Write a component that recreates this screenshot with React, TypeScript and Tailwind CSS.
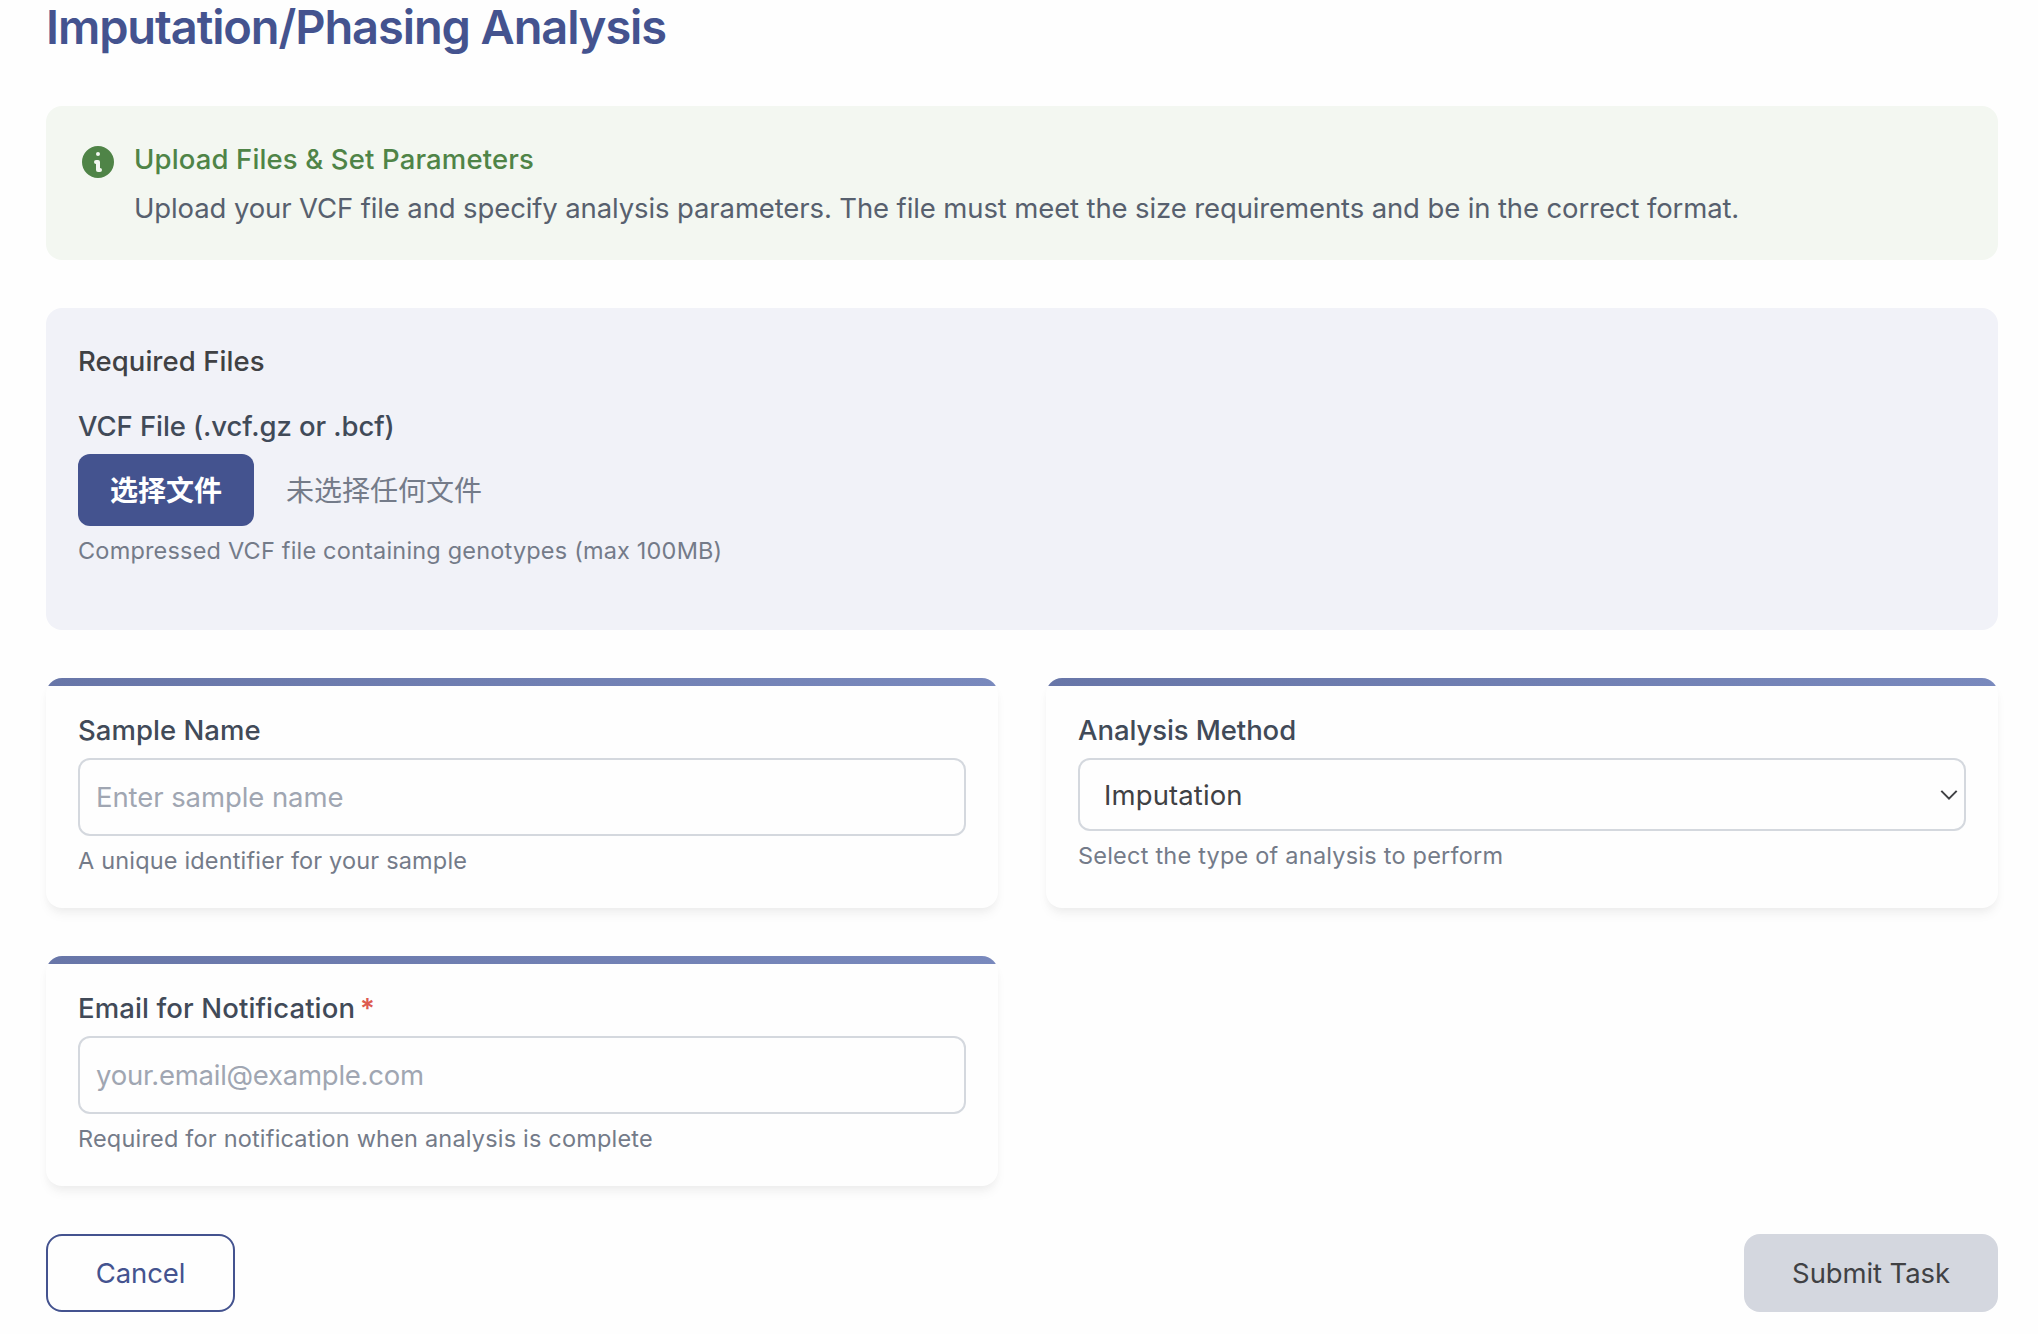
import React from "react";

interface FieldCardProps {
  label: string;
  labelClass: string;
  required?: boolean;
  hint: string;
  hintClass: string;
  children: React.ReactNode;
}

function FieldCard({ label, labelClass, required, hint, hintClass, children }: FieldCardProps) {
  return (
    <div className="h-[230px] overflow-hidden rounded-2xl bg-[#fefefe] shadow-[0_8px_12px_-2px_rgba(0,0,0,0.05),0_4px_8px_-2px_rgba(0,0,0,0.03)]">
      <div className="h-2 bg-linear-to-r from-[#6876a8] to-[#7989bd]" />
      <div className="px-8 pt-6">
        <label className="block text-[27.5px] leading-[40px] font-medium whitespace-nowrap text-[#414a58]">
          <span className={labelClass}>{label}</span>
          {required && <span className="ml-[5px] font-semibold text-[#dd5a50]">*</span>}
        </label>
        <div className="mt-2">{children}</div>
        <p className={`mt-2 text-[23.5px] leading-[33px] whitespace-nowrap text-[#747b89] ${hintClass}`}>{hint}</p>
      </div>
    </div>
  );
}

const inputClass =
  "block h-[78px] w-full rounded-xl border-2 border-[#d4d8de] bg-[#fefefe] px-4 text-[27.5px] placeholder:text-[#a0a6b2] placeholder:opacity-100 outline-none";

export default function App() {
  return (
    <main className="h-[1334px] bg-[#fefefe] pr-10 pl-[46px] font-['Inter','Noto_Sans_CJK_SC',sans-serif] text-[#404144]">
      <h1 className="text-[47px] leading-[54px] font-semibold tracking-[-1.1px] whitespace-nowrap text-[#44538f]">
        Imputation/Phasing Analysis
      </h1>

      <section className="mt-[52px] flex h-[154px] gap-4 rounded-2xl bg-[#f3f7f1] p-8">
        <svg viewBox="0 0 20 20" className="mt-1 -ml-0 size-10 shrink-0 fill-[#4f8447]">
          <path
            fillRule="evenodd"
            clipRule="evenodd"
            d="M18 10a8 8 0 11-16 0 8 8 0 0116 0zm-7-4a1 1 0 11-2 0 1 1 0 012 0zM9 9a1 1 0 000 2v3a1 1 0 001 1h1a1 1 0 100-2v-3a1 1 0 00-1-1H9z"
          />
        </svg>
        <div className="text-[27.5px] leading-[42px] whitespace-nowrap">
          <h2 className="font-medium tracking-[0.14px] text-[#4f8447]">Upload Files &amp; Set Parameters</h2>
          <p className="mt-[7px] tracking-[-0.12px] text-[#57606e]">
            Upload your VCF file and specify analysis parameters. The file must meet the size requirements and be in the
            correct format.
          </p>
        </div>
      </section>

      <section className="mt-12 h-[322px] rounded-2xl bg-[#f1f2f8] p-8 text-[27.5px]">
        <h3 className="leading-[42px] font-medium tracking-[0.06px]">Required Files</h3>
        <label className="mt-6 block leading-[40px] font-medium tracking-[-0.08px] text-[#414a58]">
          VCF File (.vcf.gz or .bcf)
        </label>
        <div className="mt-2 flex items-center gap-8 text-[28px]">
          <button className="h-[72px] w-44 rounded-xl bg-[#44538f] pt-0.5 font-semibold text-white">选择文件</button>
          <span className="pt-0.5 text-[#747b89]">未选择任何文件</span>
        </div>
        <p className="mt-2 text-[23.5px] leading-[33px] tracking-[0.187px] text-[#747b89]">
          Compressed VCF file containing genotypes (max 100MB)
        </p>
      </section>

      <section className="mt-12 grid grid-cols-2 gap-12">
        <FieldCard
          label="Sample Name"
          labelClass="tracking-[0.04px]"
          hint="A unique identifier for your sample"
          hintClass="tracking-[0.17px]"
        >
          <input className={`${inputClass} tracking-[-0.08px]`} placeholder="Enter sample name" />
        </FieldCard>

        <FieldCard
          label="Analysis Method"
          labelClass="tracking-[-0.08px]"
          hint="Select the type of analysis to perform"
          hintClass="tracking-[0.217px]"
        >
          <button className="flex h-[73px] w-full items-center justify-between rounded-xl border-2 border-[#d4d8de] bg-[#fefefe] pr-1.5 pl-6 text-[27.5px] tracking-[0.12px]">
            <span className="pt-0.5">Imputation</span>
            <svg viewBox="0 0 18 10" className="h-2.5 w-[18px] fill-none stroke-[#404144] stroke-2">
              <path d="M1.3 0.9L9 8.6L16.7 0.9" />
            </svg>
          </button>
        </FieldCard>

        <FieldCard
          label="Email for Notification"
          labelClass="tracking-[0.12px]"
          required
          hint="Required for notification when analysis is complete"
          hintClass="tracking-[0.19px]"
        >
          <input className={`${inputClass} tracking-[-0.255px]`} placeholder="your.email@example.com" />
        </FieldCard>
      </section>

      <footer className="mt-12 flex justify-between text-[27.5px]">
        <button className="h-[78px] w-[189px] rounded-2xl border-2 border-[#44538f] bg-[#fefefe] pt-0.5 tracking-[-0.08px] text-[#44538f]">
          Cancel
        </button>
        <button className="h-[78px] w-[254px] rounded-2xl bg-[#d4d7df] pt-0.5 tracking-[-0.11px]">Submit Task</button>
      </footer>
    </main>
  );
}
